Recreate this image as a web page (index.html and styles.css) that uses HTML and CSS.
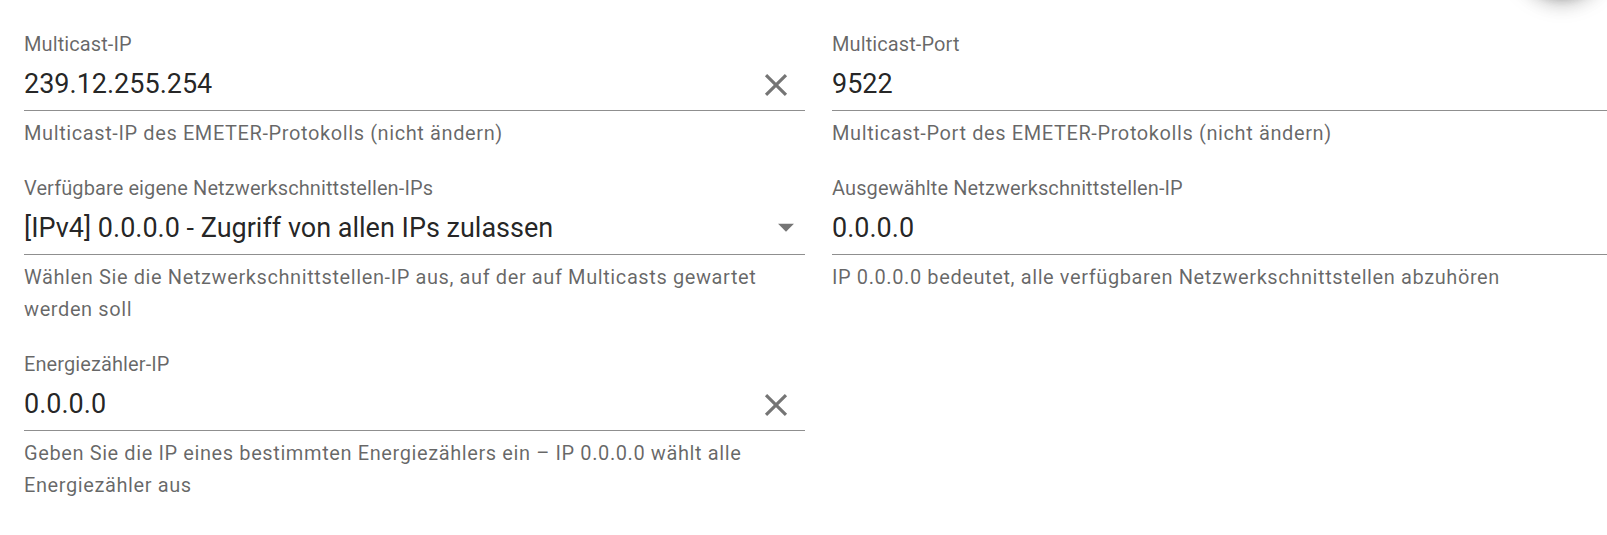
FILE: index.html
```html
<!DOCTYPE html>
<html lang="de">
<head>
<meta charset="utf-8">
<title>EMETER</title>
<link rel="stylesheet" href="styles.css">
</head>
<body>
<div class="fab-shadow"></div>
<div class="form">
  <div class="field">
    <div class="label">Multicast-IP</div>
    <div class="control">
      <span class="value">239.12.255.254</span>
      <span class="clear"><svg viewBox="0 0 24 24"><path d="M19 6.41 17.59 5 12 10.59 6.41 5 5 6.41 10.59 12 5 17.59 6.41 19 12 13.41 17.59 19 19 17.59 13.41 12z"/></svg></span>
    </div>
    <div class="helper">Multicast-IP des EMETER-Protokolls (nicht ändern)</div>
  </div>
  <div class="field">
    <div class="label">Multicast-Port</div>
    <div class="control">
      <span class="value">9522</span>
    </div>
    <div class="helper">Multicast-Port des EMETER-Protokolls (nicht ändern)</div>
  </div>
  <div class="field">
    <div class="label">Verfügbare eigene Netzwerkschnittstellen-IPs</div>
    <div class="control">
      <span class="value">[IPv4] 0.0.0.0 - Zugriff von allen IPs zulassen</span>
      <span class="drop"><svg viewBox="0 0 24 24"><path d="M7 10l5 5 5-5z"/></svg></span>
    </div>
    <div class="helper">Wählen Sie die Netzwerkschnittstellen-IP aus, auf der auf Multicasts gewartet werden soll</div>
  </div>
  <div class="field">
    <div class="label">Ausgewählte Netzwerkschnittstellen-IP</div>
    <div class="control">
      <span class="value">0.0.0.0</span>
    </div>
    <div class="helper">IP 0.0.0.0 bedeutet, alle verfügbaren Netzwerkschnittstellen abzuhören</div>
  </div>
  <div class="field">
    <div class="label">Energiezähler-IP</div>
    <div class="control">
      <span class="value">0.0.0.0</span>
      <span class="clear"><svg viewBox="0 0 24 24"><path d="M19 6.41 17.59 5 12 10.59 6.41 5 5 6.41 10.59 12 5 17.59 6.41 19 12 13.41 17.59 19 19 17.59 13.41 12z"/></svg></span>
    </div>
    <div class="helper">Geben Sie die IP eines bestimmten Energiezählers ein – IP 0.0.0.0 wählt alle Energiezähler aus</div>
  </div>
</div>
</body>
</html>
```
FILE: styles.css
```css
html, body {
  margin: 0;
  padding: 0;
  background: #ffffff;
  overflow: hidden;
}
body {
  font-family: Roboto, "Liberation Sans", sans-serif;
  width: 1607px;
  height: 535px;
  position: relative;
}
.fab-shadow {
  position: absolute;
  top: -92px;
  left: 1518px;
  width: 88px;
  height: 88px;
  border-radius: 50%;
  background: #fff;
  box-shadow: 0 5px 8px -2px rgba(0,0,0,0.2), 0 9px 16px 1px rgba(0,0,0,0.14), 0 2px 28px 2px rgba(0,0,0,0.12);
}
.form {
  display: grid;
  grid-template-columns: 781px 781px;
  column-gap: 27px;
  row-gap: 27px;
  padding: 32px 0 0 24px;
  align-items: start;
}
.field {
  display: flex;
  flex-direction: column;
}
.label {
  font-size: 20px;
  line-height: 24px;
  height: 24px;
  color: rgba(0,0,0,0.6);
  letter-spacing: 0.005em;
  white-space: nowrap;
}
.control {
  margin-top: 9px;
  height: 45px;
  border-bottom: 1px solid #8f8f8f;
  display: flex;
  align-items: flex-start;
  position: relative;
}
.value {
  flex: 1;
  font-size: 27px;
  line-height: 38px;
  color: rgba(0,0,0,0.87);
  white-space: nowrap;
}
.clear {
  width: 38px;
  height: 38px;
  margin-right: 10px;
  margin-top: 1px;
  display: flex;
}
.clear svg, .drop svg {
  width: 38px;
  height: 38px;
  fill: #757575;
}
.drop {
  width: 38px;
  height: 38px;
  margin-top: -1px;
  display: flex;
}
.helper {
  margin-top: 6px;
  font-size: 20px;
  line-height: 32px;
  color: rgba(0,0,0,0.6);
  letter-spacing: 0.03em;
}
```
